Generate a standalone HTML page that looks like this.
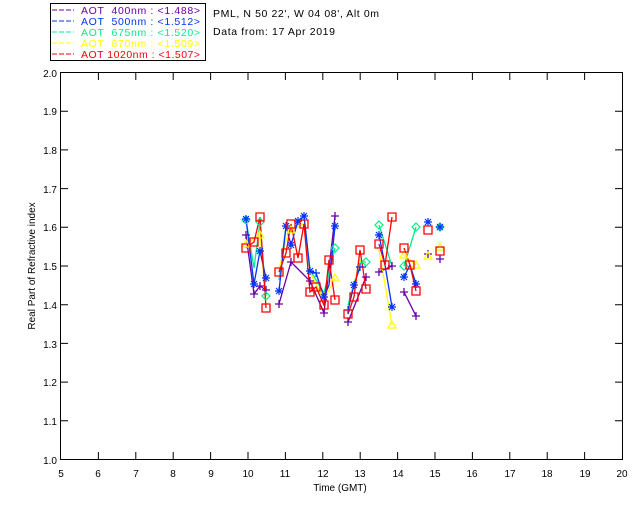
<!DOCTYPE html>
<html><head><meta charset="utf-8"><style>
html,body{margin:0;padding:0;background:#fff;}
svg{display:block;font-family:"Liberation Sans",sans-serif;}
text{white-space:pre;}
</style></head><body>
<svg width="640" height="512" viewBox="0 0 640 512" xmlns="http://www.w3.org/2000/svg">
<rect width="640" height="512" fill="#fff"/>
<rect x="50.5" y="3.5" width="155" height="57" fill="none" stroke="#000" stroke-width="1"/>
<g font-size="10.5">
<line x1="52" y1="10" x2="74" y2="10" stroke="#6a00a8" stroke-dasharray="5,2"/>
<text x="81" y="14" fill="#6a00a8" textLength="119" lengthAdjust="spacing">AOT  400nm : &lt;1.488&gt;</text>
<line x1="52" y1="21" x2="74" y2="21" stroke="#0033ff" stroke-dasharray="5,2"/>
<text x="81" y="25" fill="#0033ff" textLength="119" lengthAdjust="spacing">AOT  500nm : &lt;1.512&gt;</text>
<line x1="52" y1="32" x2="74" y2="32" stroke="#00ee88" stroke-dasharray="5,2"/>
<text x="81" y="36" fill="#00ee88" textLength="119" lengthAdjust="spacing">AOT  675nm : &lt;1.520&gt;</text>
<line x1="52" y1="43" x2="74" y2="43" stroke="#ffff00" stroke-dasharray="5,2"/>
<text x="81" y="47" fill="#ffff00" textLength="119" lengthAdjust="spacing">AOT  870nm : &lt;1.509&gt;</text>
<line x1="52" y1="54" x2="74" y2="54" stroke="#ff0000" stroke-dasharray="5,2"/>
<text x="81" y="58" fill="#ff0000" textLength="119" lengthAdjust="spacing">AOT 1020nm : &lt;1.507&gt;</text>
</g>
<text x="213" y="17" font-size="10.5" textLength="166" lengthAdjust="spacing">PML, N 50 22', W 04 08', Alt 0m</text>
<text x="213" y="35" font-size="10.5" textLength="122" lengthAdjust="spacing">Data from: 17 Apr 2019</text>
<rect x="60.5" y="72.5" width="562" height="387" fill="none" stroke="#000" stroke-width="1"/>
<g stroke="#000">
<path d="M61 111.2h7M61 149.9h7M61 188.6h7M61 227.3h7M61 266h7M61 304.7h7M61 343.4h7M61 382.1h7M61 420.8h7"/>
<path d="M615 111.2h7M615 149.9h7M615 188.6h7M615 227.3h7M615 266h7M615 304.7h7M615 343.4h7M615 382.1h7M615 420.8h7"/>
<path d="M98.4 459v-7M135.8 459v-7M173.2 459v-7M210.6 459v-7M248 459v-7M285.4 459v-7M322.8 459v-7M360.2 459v-7M397.6 459v-7M435 459v-7M472.4 459v-7M509.8 459v-7M547.2 459v-7M584.6 459v-7"/>
<path d="M98.4 73v7M135.8 73v7M173.2 73v7M210.6 73v7M248 73v7M285.4 73v7M322.8 73v7M360.2 73v7M397.6 73v7M435 73v7M472.4 73v7M509.8 73v7M547.2 73v7M584.6 73v7"/>
</g>
<g font-size="10" text-anchor="end">
<text x="57" y="77">2.0</text><text x="57" y="115">1.9</text><text x="57" y="154">1.8</text><text x="57" y="193">1.7</text><text x="57" y="231">1.6</text><text x="57" y="270">1.5</text><text x="57" y="309">1.4</text><text x="57" y="348">1.3</text><text x="57" y="386">1.2</text><text x="57" y="425">1.1</text><text x="57" y="464">1.0</text>
</g>
<g font-size="10" text-anchor="middle">
<text x="61" y="477">5</text><text x="98" y="477">6</text><text x="136" y="477">7</text><text x="173" y="477">8</text><text x="211" y="477">9</text><text x="248" y="477">10</text><text x="285" y="477">11</text><text x="323" y="477">12</text><text x="360" y="477">13</text><text x="398" y="477">14</text><text x="435" y="477">15</text><text x="472" y="477">16</text><text x="510" y="477">17</text><text x="547" y="477">18</text><text x="585" y="477">19</text><text x="622" y="477">20</text>
<text x="340" y="491">Time (GMT)</text>
</g>
<text transform="translate(35,266) rotate(-90)" font-size="10" text-anchor="middle">Real Part of Refractive index</text>
<g fill="none" stroke-width="1.3">
<g stroke="#6a00a8">
<polyline points="246,235 254,294 260,286 266,290"/>
<polyline points="279,304 291,262 310,281 324,313 335,216"/>
<polyline points="348,322 366,277"/>
<polyline points="379,272 392,266"/>
<polyline points="404,292 416,316"/>
</g>
<g stroke="#00ee88">
<polyline points="246,220 254,268 260,222 266,296"/>
<polyline points="279,280 286,226 291,232 304,216 310,270 324,293 335,248"/>
<polyline points="348,305 360,262 366,262"/>
<polyline points="379,225 392,266"/>
<polyline points="404,266 416,227"/>
</g>
<g stroke="#ffff00">
<polyline points="246,244 260,235 266,300"/>
<polyline points="279,270 286,240 291,230 304,224 310,272 324,300 335,278"/>
<polyline points="348,310 360,260 366,265"/>
<polyline points="379,250 392,325"/>
<polyline points="404,255 416,265"/>
</g>
<g stroke="#0033ff">
<polyline points="246,219 254,284 260,251 266,278"/>
<polyline points="279,291 286,226 291,245 298,221 304,216 310,271 316,273 324,297 329,285 335,226"/>
<polyline points="348,310 354,285 360,267 366,267"/>
<polyline points="379,235 385,265 392,307"/>
<polyline points="404,277 410,265 416,284"/>
</g>
<g stroke="#ff0000">
<polyline points="246,248 254,242 260,217 266,308"/>
<polyline points="279,272 286,253 291,224 298,258 304,224 310,292 316,287 324,305 329,260 335,300"/>
<polyline points="348,314 354,297 360,250 366,289"/>
<polyline points="379,244 385,265 392,217"/>
<polyline points="404,248 410,265 416,291"/>
</g>
</g>
<g stroke="#6a00a8" stroke-width="1.3">
<path d="M242 235h8M246 231v8M250 294h8M254 290v8M256 286h8M260 282v8M262 290h8M266 286v8M275 304h8M279 300v8M287 262h8M291 258v8M306 281h8M310 277v8M320 313h8M324 309v8M331 216h8M335 212v8M344 322h8M348 318v8M362 277h8M366 273v8M375 272h8M379 268v8M388 266h8M392 262v8M400 292h8M404 288v8M412 316h8M416 312v8M424 254h8M428 250v8M436 259h8M440 255v8"/>
</g>
<g fill="none" stroke="#00ee88" stroke-width="1.2">
<path d="M246 216l4 4-4 4-4-4zM260 218l4 4-4 4-4-4zM266 292l4 4-4 4-4-4zM335 244l4 4-4 4-4-4zM366 258l4 4-4 4-4-4zM379 221l4 4-4 4-4-4zM416 223l4 4-4 4-4-4zM404 262l4 4-4 4-4-4zM440 223l4 4-4 4-4-4z"/>
</g>
<g fill="none" stroke="#ffff00" stroke-width="1.2">
<path d="M246 240l4 7h-8zM260 231l4 7h-8zM291 226l4 7h-8zM335 274l4 7h-8zM392 321l4 7h-8zM404 251l4 7h-8zM416 261l4 7h-8zM428 252l4 7h-8zM440 243l4 7h-8z"/>
</g>
<g stroke="#0033ff" stroke-width="1.2">
<path d="M242 219h8M246 215v8M243 216l6 6M249 216l-6 6 M250 284h8M254 280v8M251 281l6 6M257 281l-6 6 M256 251h8M260 247v8M257 248l6 6M263 248l-6 6 M262 278h8M266 274v8M263 275l6 6M269 275l-6 6 M275 291h8M279 287v8M276 288l6 6M282 288l-6 6 M282 226h8M286 222v8M283 223l6 6M289 223l-6 6 M287 245h8M291 241v8M288 242l6 6M294 242l-6 6 M294 221h8M298 217v8M295 218l6 6M301 218l-6 6 M300 216h8M304 212v8M301 213l6 6M307 213l-6 6 M306 271h8M310 267v8M307 268l6 6M313 268l-6 6 M312 273h8M316 269v8M320 297h8M324 293v8M321 294l6 6M327 294l-6 6 M331 226h8M335 222v8M332 223l6 6M338 223l-6 6 M344 310h8M348 306v8M350 285h8M354 281v8M351 282l6 6M357 282l-6 6 M356 267h8M360 263v8M375 235h8M379 231v8M376 232l6 6M382 232l-6 6 M388 307h8M392 303v8M389 304l6 6M395 304l-6 6 M400 277h8M404 273v8M401 274l6 6M407 274l-6 6 M412 284h8M416 280v8M413 281l6 6M419 281l-6 6 M424 222h8M428 218v8M425 219l6 6M431 219l-6 6 M436 227h8M440 223v8M437 224l6 6M443 224l-6 6"/>
</g>
<g fill="none" stroke="#ff0000" stroke-width="1.3">
<path d="M242 244h8v8h-8zM250 238h8v8h-8zM256 213h8v8h-8zM262 304h8v8h-8zM275 268h8v8h-8zM282 249h8v8h-8zM287 220h8v8h-8zM294 254h8v8h-8zM300 220h8v8h-8zM306 288h8v8h-8zM312 283h8v8h-8zM320 301h8v8h-8zM325 256h8v8h-8zM331 296h8v8h-8zM344 310h8v8h-8zM350 293h8v8h-8zM356 246h8v8h-8zM362 285h8v8h-8zM375 240h8v8h-8zM381 261h8v8h-8zM388 213h8v8h-8zM400 244h8v8h-8zM406 261h8v8h-8zM412 287h8v8h-8zM424 226h8v8h-8zM436 247h8v8h-8z"/>
</g>
</svg>
</body></html>
